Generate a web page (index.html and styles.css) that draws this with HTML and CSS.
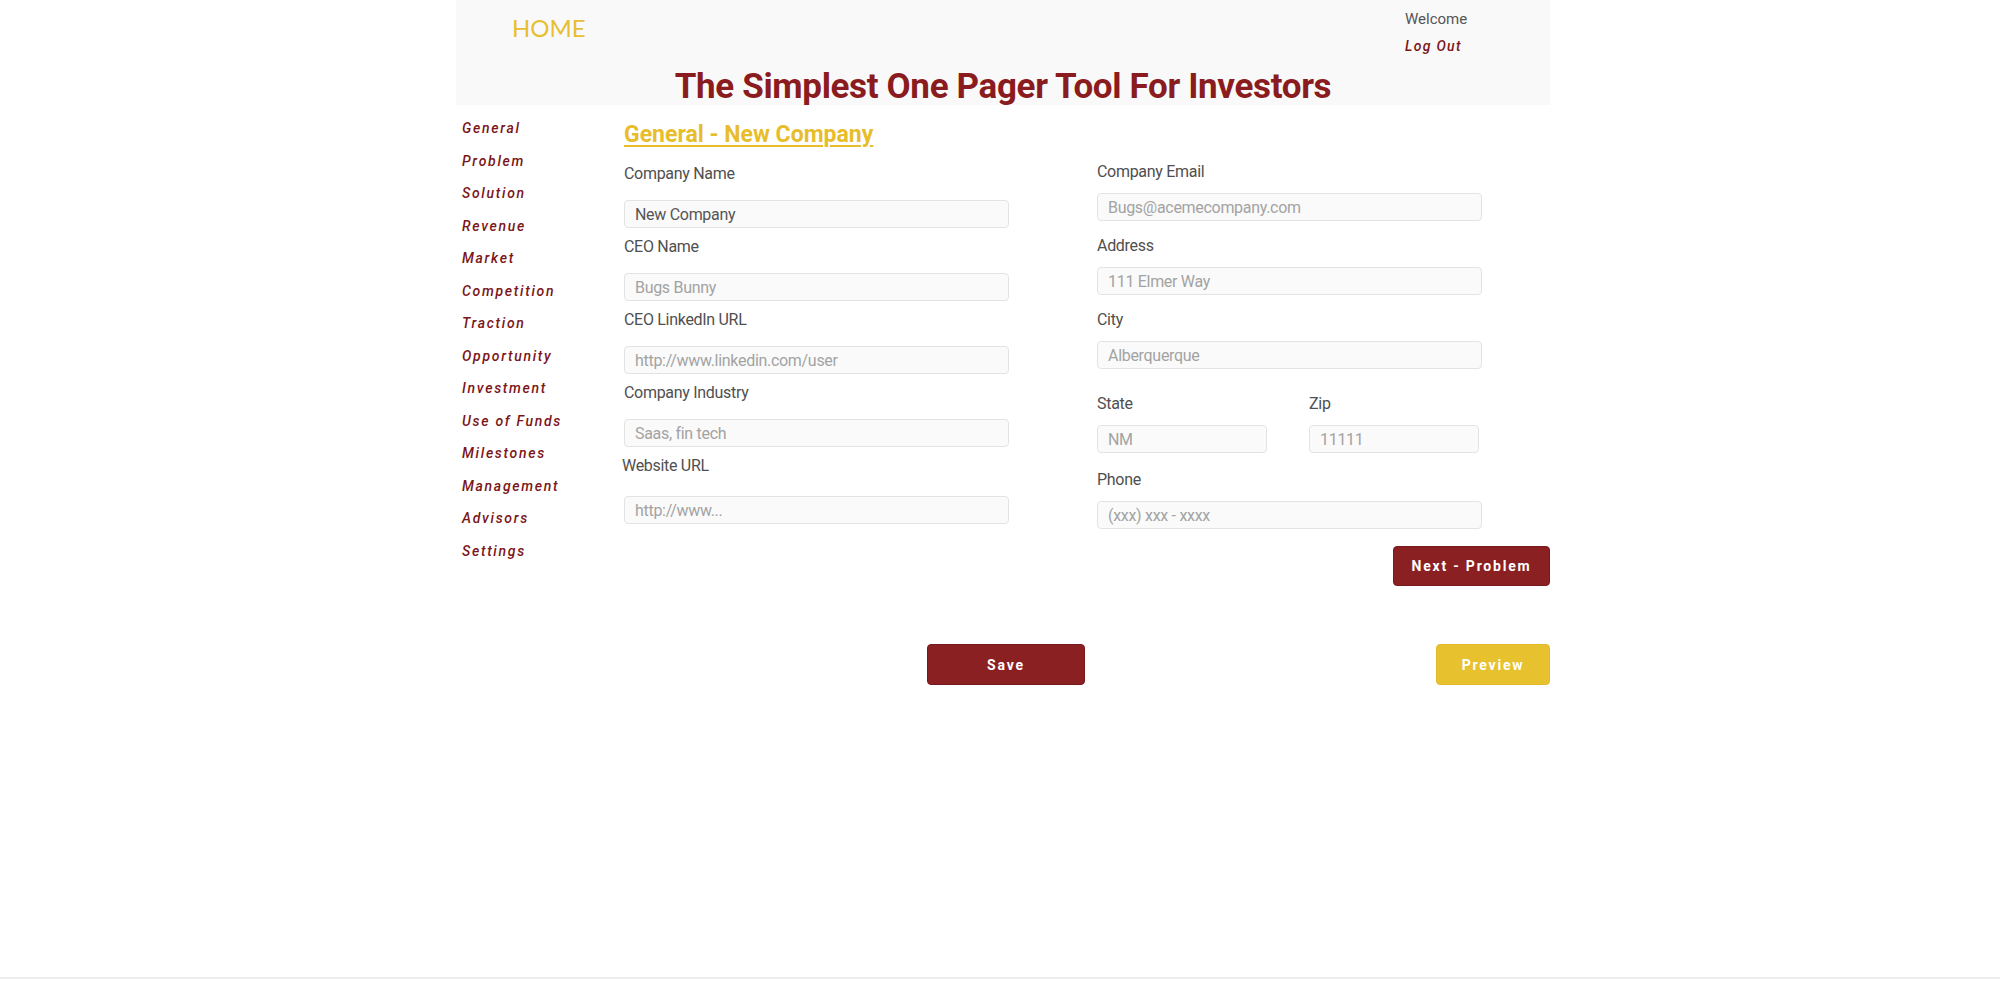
FILE: index.html
```html
<!DOCTYPE html>
<html lang="en">
<head>
  <meta charset="UTF-8" />
  <title>One Pager - General</title>
  <link rel="stylesheet" href="styles.css">
</head>
<body>

  <div class="page">
    <header class="topbar">
      <div class="topbar-row">
        <a class="home" href="#">HOME</a>
        <div class="user">
          <div class="welcome">Welcome</div>
          <a class="logout" href="#">Log Out</a>
        </div>
      </div>
      <h1 class="title">The Simplest One Pager Tool For Investors</h1>
    </header>

    <div class="main">
      <nav class="sidenav">
        <a href="#">General</a>
        <a href="#">Problem</a>
        <a href="#">Solution</a>
        <a href="#">Revenue</a>
        <a href="#">Market</a>
        <a href="#">Competition</a>
        <a href="#">Traction</a>
        <a href="#">Opportunity</a>
        <a href="#">Investment</a>
        <a href="#">Use of Funds</a>
        <a href="#">Milestones</a>
        <a href="#">Management</a>
        <a href="#">Advisors</a>
        <a href="#">Settings</a>
      </nav>

      <section class="content">
        <h2 class="section-title">General - New Company</h2>

        <div class="form-grid">
          <div class="col col-left">
            <div class="field">
              <label>Company Name</label>
              <input type="text" value="New Company" />
            </div>
            <div class="field">
              <label>CEO Name</label>
              <input type="text" placeholder="Bugs Bunny" />
            </div>
            <div class="field">
              <label>CEO LinkedIn URL</label>
              <input type="text" placeholder="http://www.linkedin.com/user" />
            </div>
            <div class="field">
              <label>Company Industry</label>
              <input type="text" placeholder="Saas, fin tech" />
            </div>
            <div class="field field-url">
              <label>Website URL</label>
              <input type="text" placeholder="http://www..." />
            </div>
          </div>

          <div class="col col-right">
            <div class="field">
              <label>Company Email</label>
              <input type="email" placeholder="Bugs@acemecompany.com" />
            </div>
            <div class="field">
              <label>Address</label>
              <input type="text" placeholder="111 Elmer Way" />
            </div>
            <div class="field">
              <label>City</label>
              <input type="text" placeholder="Alberquerque" />
            </div>
            <div class="field-row">
              <div class="field">
                <label>State</label>
                <input type="text" placeholder="NM" />
              </div>
              <div class="field">
                <label>Zip</label>
                <input type="text" placeholder="11111" />
              </div>
            </div>
            <div class="field">
              <label>Phone</label>
              <input type="tel" placeholder="(xxx) xxx - xxxx" />
            </div>
          </div>
        </div>

        <div class="next-row">
          <button class="btn btn-red btn-next">Next - Problem</button>
        </div>
      </section>
    </div>

    <div class="actions">
      <span></span>
      <button class="btn btn-red btn-save">Save</button>
      <button class="btn btn-yellow btn-preview">Preview</button>
    </div>
  </div>

  <footer class="footer"></footer>

</body>
</html>
```

FILE: styles.css
```css
* {
  box-sizing: border-box;
}
body {
  margin: 0;
  min-height: 100vh;
  display: flex;
  flex-direction: column;
  background: #fff;
  color: #4f4f4f;
  font-family: Roboto, 'Liberation Sans', sans-serif;
}
a {
  text-decoration: none;
}
.page {
  width: 1100px;
  padding-left: 6px;
  margin: 0 auto;
}

/* header */
.topbar {
  background: #f9f9f9;
  height: 105px;
  padding-top: 9px;
}
.topbar-row {
  display: flex;
  justify-content: space-between;
  align-items: flex-start;
  padding-left: 56px;
}
.home {
  margin-top: 4px;
  font-family: Lato, sans-serif;
  font-size: 24px;
  line-height: 30px;
  color: #e8bf30;
}
.user {
  width: 100px;
  margin-right: 45px;
}
.welcome {
  font-size: 15px;
  line-height: 20px;
  color: #555;
}
.logout {
  display: block;
  margin-top: 7px;
  font-size: 14px;
  line-height: 20px;
  font-style: italic;
  font-weight: 500;
  letter-spacing: 1.3px;
  color: #7b1619;
}
.title {
  margin: 13px 0 0;
  text-align: center;
  font-size: 35px;
  line-height: 36px;
  font-weight: 700;
  letter-spacing: -0.35px;
  color: #8a1c20;
}

/* body */
.main {
  display: flex;
}
.sidenav {
  width: 168px;
  flex-shrink: 0;
  padding: 7px 0 0 6px;
}
.sidenav a {
  display: block;
  font-size: 14px;
  line-height: 32.5px;
  font-style: italic;
  font-weight: 500;
  letter-spacing: 1.7px;
  color: #7b1619;
}
.content {
  flex: 1;
  padding-top: 16px;
}
.section-title {
  margin: 0 0 14px;
  font-size: 23px;
  line-height: 28px;
  font-weight: 700;
  color: #e8bd2c;
  text-decoration: underline;
  text-decoration-thickness: 2px;
  text-underline-offset: 3px;
}
.form-grid {
  display: grid;
  grid-template-columns: 385px 385px;
  column-gap: 88px;
  align-items: start;
}
.field label {
  display: block;
  font-size: 16px;
  line-height: 20px;
  letter-spacing: -0.3px;
  color: #4f4f4f;
}
.field input {
  display: block;
  width: 100%;
  height: 28px;
  padding: 0 10px;
  font-family: Roboto, 'Liberation Sans', sans-serif;
  font-size: 16px;
  letter-spacing: -0.3px;
  color: #555;
  background: #fafafa;
  border: 1px solid #e3e3e3;
  border-radius: 4px;
  outline: none;
}
.field input::placeholder {
  color: #a3a3a3;
}
.col-left .field {
  margin-bottom: 9px;
}
.col-left .field label {
  margin-top: 1px;
  margin-bottom: 16px;
}
.col-left .field-url label {
  margin-left: -2px;
  margin-bottom: 20px;
}
.col-right {
  margin-top: -1px;
}
.col-right .field {
  margin-bottom: 15px;
}
.col-right .field label {
  margin-bottom: 11px;
}
.col > .field:last-child {
  margin-bottom: 0;
}
.field-row {
  display: grid;
  grid-template-columns: 170px 170px;
  column-gap: 42px;
  margin: 25px 0 17px;
}
.col-right .field-row .field {
  margin-bottom: 0;
}

/* buttons */
.btn {
  height: 41px;
  font-family: Roboto, 'Liberation Sans', sans-serif;
  font-size: 14px;
  font-weight: 700;
  letter-spacing: 1.8px;
  color: #fff;
  border-radius: 4px;
  cursor: pointer;
}
.btn-red {
  background: #8b2023;
  border: 1px solid #761a1d;
}
.btn-yellow {
  background: #e8c12e;
  border: 1px solid #e3bb2a;
}
.next-row {
  display: flex;
  justify-content: flex-end;
  margin-top: 17px;
}
.btn-next {
  width: 157px;
  height: 40px;
}
.actions {
  display: grid;
  grid-template-columns: 1fr auto 1fr;
  align-items: center;
  margin-top: 58px;
  padding-left: 6px;
}
.btn-save {
  width: 158px;
}
.btn-preview {
  width: 114px;
  justify-self: end;
}

.footer {
  margin-top: auto;
  height: 4px;
  border-top: 2px solid #ececec;
}
```
